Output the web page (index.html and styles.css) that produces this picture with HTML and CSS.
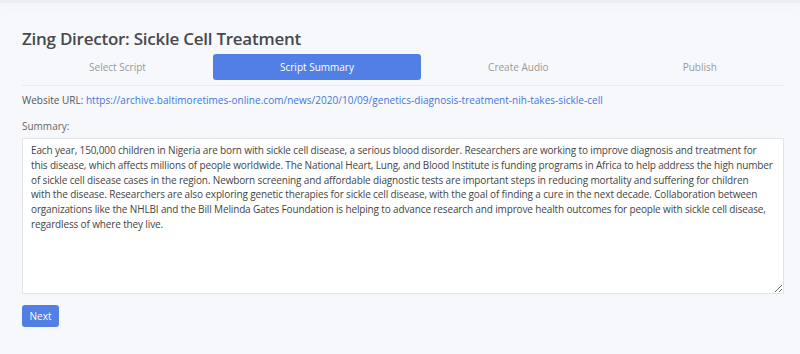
FILE: index.html
```html
<!DOCTYPE html>
<html lang="en">
<head>
<meta charset="utf-8">
<title>Zing Director</title>
<link rel="stylesheet" href="styles.css">
</head>
<body>
<div class="topbar"></div>
<main class="page">
  <h1 class="title">Zing Director: Sickle Cell Treatment</h1>
  <nav class="tabs">
    <div class="tab">Select Script</div>
    <div class="tab active">Script Summary</div>
    <div class="tab">Create Audio</div>
    <div class="tab">Publish</div>
  </nav>
  <p class="url">Website URL: <a href="#">https://archive.baltimoretimes-online.com/news/2020/10/09/genetics-diagnosis-treatment-nih-takes-sickle-cell</a></p>
  <label class="label" for="summary">Summary:</label>
  <textarea id="summary" class="summary">Each year, 150,000 children in Nigeria are born with sickle cell disease, a serious blood disorder. Researchers are working to improve diagnosis and treatment for
this disease, which affects millions of people worldwide. The National Heart, Lung, and Blood Institute is funding programs in Africa to help address the high number
of sickle cell disease cases in the region. Newborn screening and affordable diagnostic tests are important steps in reducing mortality and suffering for children
with the disease. Researchers are also exploring genetic therapies for sickle cell disease, with the goal of finding a cure in the next decade. Collaboration between
organizations like the NHLBI and the Bill Melinda Gates Foundation is helping to advance research and improve health outcomes for people with sickle cell disease,
regardless of where they live.</textarea>
  <div class="actions"><button class="btn">Next</button></div>
</main>
</body>
</html>
```

FILE: styles.css
```css
* { box-sizing: border-box; }
html, body { margin: 0; padding: 0; }
body {
  background: #f7f8fc;
  font-family: "Open Sans", "Liberation Sans", sans-serif;
  color: #555;
  height: 354px;
  overflow: hidden;
}
.topbar {
  height: 3px;
  background: #eceef1;
  box-shadow: 0 2px 10px rgba(0,0,0,0.06);
}
.page {
  padding: 0 16px 0 22px;
}
.title {
  margin: 24px 0 0;
  font-size: 17px;
  font-weight: 600;
  letter-spacing: -0.25px;
  color: #46494f;
  line-height: 24px;
}
.tabs {
  display: flex;
  margin-top: 3px;
  padding-bottom: 5px;
  border-bottom: 1px solid #e9ebef;
}
.tab {
  flex: 1 1 auto;
  height: 26px;
  line-height: 26px;
  text-align: center;
  font-size: 10px;
  color: #999;
  border-radius: 3px;
}
.tab.active {
  background: #527fe3;
  color: #fff;
}
.url {
  margin: 7px 0 0;
  font-size: 10px;
  line-height: 14px;
  color: #555;
}
.url a {
  color: #3f74e0;
  text-decoration: none;
  letter-spacing: 0.03px;
}
.label {
  display: block;
  margin-top: 12px;
  font-size: 10px;
  line-height: 14px;
  color: #666;
}
.summary {
  display: block;
  margin-top: 5px;
  width: 762px;
  height: 156px;
  padding: 4px 8px;
  border: 1px solid #e1e5e9;
  border-radius: 1px;
  background: #fff;
  font-family: inherit;
  font-size: 10px;
  line-height: 14.8px;
  letter-spacing: -0.14px;
  color: #444;
  resize: vertical;
  overflow: hidden;
}
.actions {
  margin-top: 9px;
}
.btn {
  width: 37px;
  height: 22px;
  padding: 0;
  border: none;
  border-radius: 3px;
  background: #527fe3;
  color: #fff;
  font-family: inherit;
  font-size: 10px;
}
```
